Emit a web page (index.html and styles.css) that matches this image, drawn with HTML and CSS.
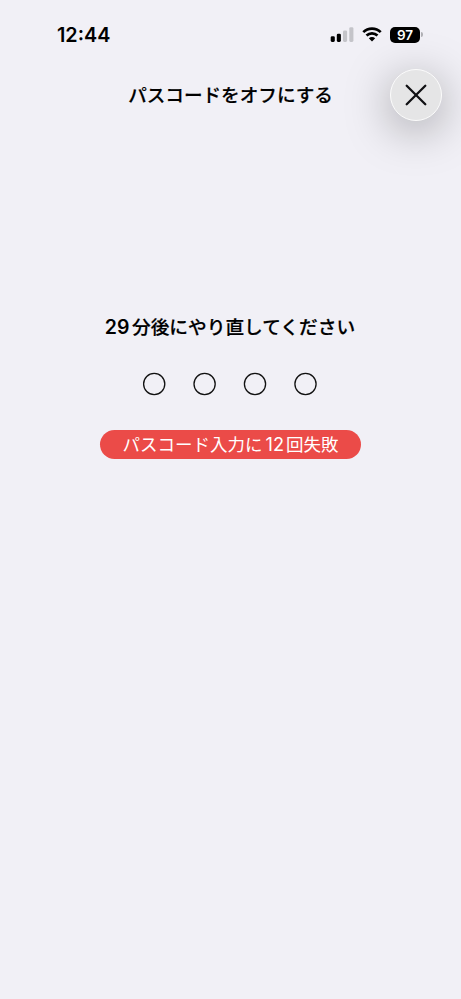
FILE: index.html
```html
<!DOCTYPE html>
<html lang="ja">
<head>
<meta charset="utf-8">
<title>パスコードをオフにする</title>
<link rel="stylesheet" href="styles.css">
</head>
<body>
<div class="screen">
  <header class="status">
    <span class="time">12:44</span>
    <div class="indicators">
      <svg class="signal" width="24" height="16" viewBox="0 0 24 16">
        <rect x="0.7" y="9.3" width="4.1" height="5.6" rx="1.3"/>
        <rect x="6.8" y="6.7" width="4.1" height="8.2" rx="1.3"/>
        <rect class="dim" x="13" y="3.4" width="4.1" height="11.5" rx="1.3"/>
        <rect class="dim" x="19.3" y="0.2" width="4.1" height="14.7" rx="1.3"/>
      </svg>
      <svg class="wifi" width="20" height="15" viewBox="0 0 20 15">
        <path class="wave" d="M1.3 5.1C6.1.4 13.9.4 18.7 5.1M4.5 8.6C7.6 5.7 12.4 5.7 15.5 8.6"/>
        <path d="M6.8 11.2C8.6 9.5 11.4 9.5 13.2 11.2L10 14.4Z"/>
      </svg>
      <div class="battery"><span class="level">97</span><span class="cap"></span></div>
    </div>
  </header>
  <nav class="bar">
    <h1 class="title">パスコードをオフにする</h1>
    <button class="close" aria-label="閉じる">
      <svg width="22" height="22" viewBox="0 0 22 22"><path d="M1.7 1.7L20.3 20.3M20.3 1.7L1.7 20.3"/></svg>
    </button>
  </nav>
  <main class="content">
    <h2 class="message"><span class="num">29</span>分後にやり直してください</h2>
    <svg class="dots" width="176" height="24" viewBox="0 0 176 24">
      <circle cx="12.2" cy="12" r="10.6"/>
      <circle cx="62.6" cy="12" r="10.6"/>
      <circle cx="113" cy="12" r="10.6"/>
      <circle cx="163.5" cy="12" r="10.6"/>
    </svg>
    <p class="failed">パスコード入力に<span class="num">12</span>回失敗</p>
  </main>
</div>
</body>
</html>
```
FILE: styles.css
```css
* { box-sizing: border-box; }
body {
  margin: 0;
  background: #f1f0f6;
  color: #000;
  font-family: Inter, "Noto Sans CJK JP", sans-serif;
}
.screen { width: 461px; height: 999px; overflow: hidden; }
.status {
  height: 69px;
  padding: 0 38px 0 57px;
  display: flex;
  align-items: center;
  justify-content: space-between;
}
.time { font-size: 19.8px; font-weight: 600; }
.indicators { display: flex; align-items: center; }
.signal { margin-right: 8px; }
.signal .dim { fill: #c4c4c9; }
.wifi { margin-right: 8px; }
.wave { fill: none; stroke: #000; stroke-width: 2.7; }
.battery { display: flex; align-items: center; gap: 1px; }
.level {
  width: 30px;
  height: 16px;
  border-radius: 5px;
  background: #000;
  color: #fff;
  font-size: 13.5px;
  font-weight: 600;
  line-height: 16px;
  text-align: center;
}
.cap { width: 2px; height: 5px; border-radius: 0 2px 2px 0; background: #b0b0b5; }
.bar {
  height: 52px;
  padding: 0 19px 0 71px;
  display: flex;
  align-items: center;
}
.title {
  flex: 1;
  margin: 0;
  font-size: 18.6px;
  line-height: 28px;
  font-weight: 500;
  -webkit-text-stroke: 0.2px #000;
  text-align: center;
  white-space: nowrap;
}
.close {
  width: 52px;
  height: 52px;
  padding: 0;
  display: flex;
  align-items: center;
  justify-content: center;
  border: 1.5px solid #fcfcfc;
  border-radius: 50%;
  background: #e5e5e6;
  box-shadow: 0 9px 46px rgba(0, 0, 0, 0.34);
}
.close path { fill: none; stroke: #111114; stroke-width: 2.3; stroke-linecap: round; }
.content {
  padding-top: 192px;
  display: flex;
  flex-direction: column;
  align-items: center;
}
.message {
  margin: 0 1px 0 0;
  font-size: 18.7px;
  line-height: 28px;
  font-weight: 500;
  -webkit-text-stroke: 0.2px #000;
  white-space: nowrap;
}
.message .num { margin-right: 2.5px; font-size: 19.5px; font-weight: 600; -webkit-text-stroke: 0; }
.dots { display: block; margin: 30px 1px 0 0; fill: none; stroke: #111; stroke-width: 1.3; }
.failed {
  width: 261px;
  height: 29px;
  margin: 34px 0 0;
  border-radius: 15px;
  background: #eb4b48;
  color: #fff;
  font-size: 17.5px;
  line-height: 29px;
  text-align: center;
  white-space: nowrap;
}
.failed .num { margin: 0 2px 0 3px; font-size: 18.2px; }
```
